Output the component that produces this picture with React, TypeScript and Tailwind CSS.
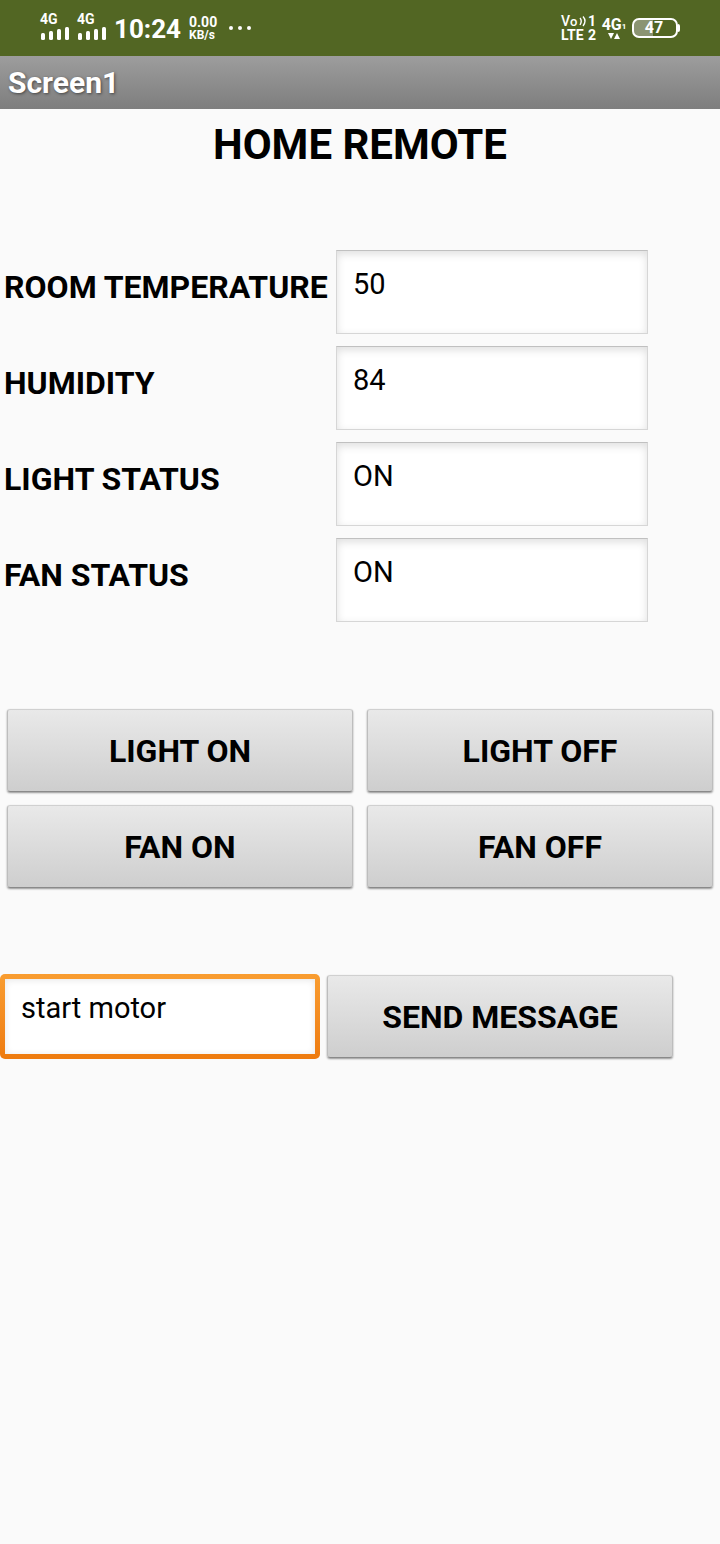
import { useState } from "react";

const fieldClass =
  "block h-[84px] w-[312px] border border-[#d6d6d6] border-t-[#c0c0c0] bg-white pb-4 pl-4 pr-4 text-[29px] text-black shadow-[inset_0_3px_9px_rgba(0,0,0,0.13)] outline-none";

const focusedFieldClass =
  "block h-[75px] w-full bg-white pb-[18px] pl-4 pr-4 text-[29px] text-black shadow-[inset_0_1px_7px_rgba(0,0,0,0.1)] outline-none";

const initialReadings = [
  { id: "temperature", label: "ROOM TEMPERATURE", value: "50" },
  { id: "humidity", label: "HUMIDITY", value: "84" },
  { id: "light", label: "LIGHT STATUS", value: "ON" },
  { id: "fan", label: "FAN STATUS", value: "ON" },
];

function Signal() {
  return (
    <div className="flex w-[29px] flex-col">
      <span className="text-[14px] font-bold leading-[13px]">4G</span>
      <svg viewBox="0 0 29 14" className="h-[14px] w-[29px]" fill="currentColor" aria-hidden="true">
        <rect x="1" y="7" width="4" height="7" rx="1.5" />
        <rect x="9" y="5" width="4" height="9" rx="1.5" />
        <rect x="17" y="3" width="4" height="11" rx="1.5" />
        <rect x="25" y="1" width="4" height="13" rx="1.5" />
      </svg>
    </div>
  );
}

function VoLte() {
  return (
    <div className="flex w-[35px] flex-col text-[14px] font-bold leading-[14px]">
      <div className="flex h-[14px] items-center justify-between">
        <span className="font-medium">
          V<span className="text-[13px]">o</span>
        </span>
        <svg viewBox="0 0 8 12" className="h-3 w-2" fill="none" stroke="currentColor" strokeWidth="1.4" aria-hidden="true">
          <path d="M1 3Q3.5 6 1 10M4 1.5Q8 6 4 11" />
        </svg>
        <span>1</span>
      </div>
      <div className="flex h-[14px] items-center justify-between">
        <span>LTE</span>
        <span>2</span>
      </div>
    </div>
  );
}

function Network() {
  return (
    <div className="flex w-[24px] flex-col items-center pt-[2px]">
      <div className="flex items-end text-[16px] font-bold leading-[14px]">
        <span>4G</span>
        <span className="text-[8px] leading-[10px]">1</span>
      </div>
      <svg viewBox="0 0 12 8" className="h-2 w-3" fill="currentColor" aria-hidden="true">
        <path d="M0 1H6L3 7ZM6 7H12L9 1Z" />
      </svg>
    </div>
  );
}

function Battery() {
  return (
    <div className="flex items-center">
      <div className="flex h-5 w-[46px] items-center justify-center rounded-[7px] border-2 border-white bg-linear-to-r from-[#8b9472] from-45% to-transparent to-45% pr-[2px] text-[16px] font-bold leading-4">
        47
      </div>
      <div className="h-2 w-[2px] rounded-r-sm bg-white" />
    </div>
  );
}

function StatusBar() {
  return (
    <header className="flex h-14 items-center justify-between bg-[#526623] pl-10 pr-10 text-white">
      <div className="flex items-center">
        <div className="flex gap-2 pb-1">
          <Signal />
          <Signal />
        </div>
        <span className="pl-2 pt-[2px] text-[26px] font-bold leading-8">10:24</span>
        <div className="flex flex-col pl-2 pt-[2px] text-[12px] font-bold leading-[13px]">
          <span className="text-[14px]">0.00</span>
          <span>KB/s</span>
        </div>
        <svg viewBox="0 0 24 6" className="ml-[11px] h-[6px] w-6" fill="currentColor" aria-hidden="true">
          <circle cx="3" cy="3" r="2" />
          <circle cx="12" cy="3" r="2" />
          <circle cx="21" cy="3" r="2" />
        </svg>
      </div>
      <div className="flex items-center gap-[6px]">
        <VoLte />
        <Network />
        <Battery />
      </div>
    </header>
  );
}

function RemoteButton({ label }: { label: string }) {
  return (
    <div className="w-1/2 px-[7px] pb-2 pt-[5px]">
      <button
        type="button"
        className="block h-[83px] w-full rounded-[3px] border border-[#bdbdbd] border-b-[#8a8a8a] border-t-[#d0d0d0] bg-linear-to-b from-[#e9e9e9] to-[#cecece] text-[32px] font-bold text-black shadow-[0_1px_2px_rgba(0,0,0,0.4)]"
      >
        {label}
      </button>
    </div>
  );
}

export default function App() {
  const [readings, setReadings] = useState(initialReadings);
  const [message, setMessage] = useState("start motor");

  return (
    <div className="min-h-screen bg-[#fafafa] font-[Roboto,sans-serif] text-black">
      <StatusBar />
      <div className="flex h-[53px] items-center bg-linear-to-b from-[#9d9d9d] to-[#7e7e7e] px-2 text-[30px] font-bold text-white [text-shadow:1px_1px_3px_rgba(0,0,0,0.5)]">
        Screen1
      </div>
      <main>
        <h1 className="pt-2 text-center text-[42px] font-bold leading-[56px]">HOME REMOTE</h1>

        <section className="flex flex-col gap-3 pt-[77px]">
          {readings.map((reading) => (
            <div key={reading.id} className="flex items-center">
              <label htmlFor={reading.id} className="w-[336px] pb-[10px] pl-1 text-[32px] font-bold">
                {reading.label}
              </label>
              <input
                id={reading.id}
                type="text"
                className={fieldClass}
                value={reading.value}
                onChange={(event) =>
                  setReadings(
                    readings.map((item) =>
                      item.id === reading.id ? { ...item, value: event.target.value } : item,
                    ),
                  )
                }
              />
            </div>
          ))}
        </section>

        <section className="pt-[82px]">
          <div className="flex">
            <RemoteButton label="LIGHT ON" />
            <RemoteButton label="LIGHT OFF" />
          </div>
          <div className="flex">
            <RemoteButton label="FAN ON" />
            <RemoteButton label="FAN OFF" />
          </div>
        </section>

        <section className="flex items-start pt-[74px]">
          <div className="w-[320px] pt-1">
            <div className="rounded-[5px] bg-linear-to-b from-[#f99d30] to-[#ee7b0e] p-[5px]">
              <input
                type="text"
                aria-label="Message"
                className={focusedFieldClass}
                value={message}
                onChange={(event) => setMessage(event.target.value)}
              />
            </div>
          </div>
          <RemoteButton label="SEND MESSAGE" />
        </section>
      </main>
    </div>
  );
}
